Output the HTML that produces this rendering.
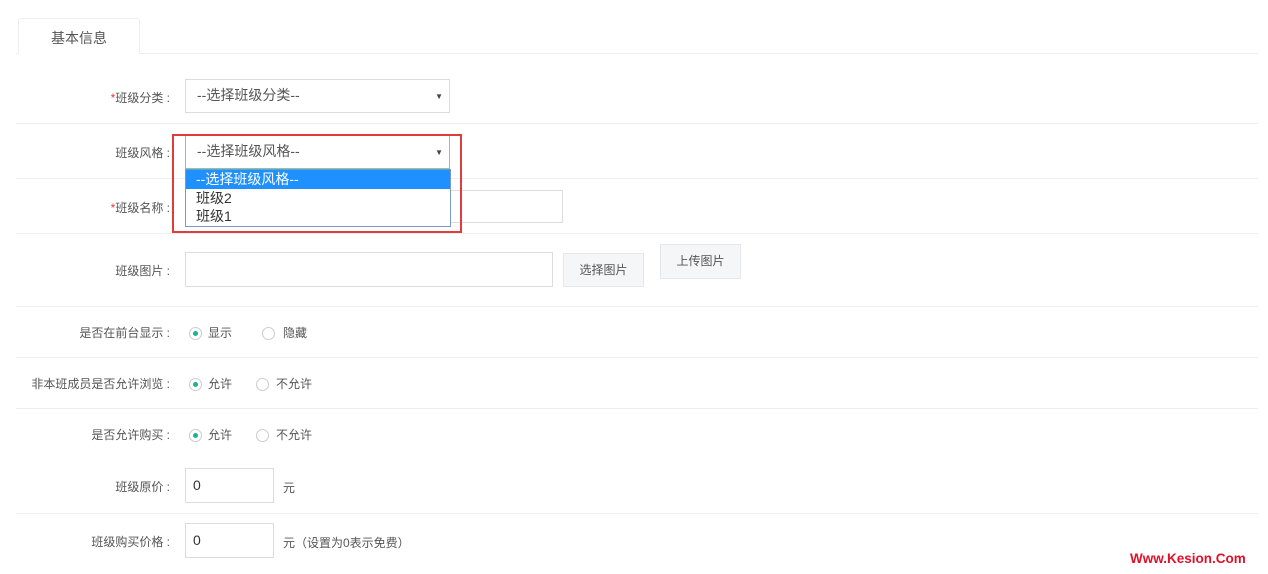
<!DOCTYPE html>
<html><head><meta charset="utf-8"><style>
body{margin:0;width:1268px;height:574px;background:#fff;font-family:"Liberation Sans","Noto Sans CJK SC",sans-serif;font-size:12px;color:#555;position:relative;overflow:hidden}
.a{position:absolute}
.hl{position:absolute;left:16px;width:1242px;height:1px;background:#eceeef}
.lb{position:absolute;right:1098px;text-align:right;white-space:nowrap}
.lb i{color:#e33;font-style:normal}
.box{position:absolute;border:1px solid #dcdcdc;background:#fff;box-sizing:border-box}
.sel{font-size:14px;color:#555;padding-left:11px;line-height:31px}
.arr{position:absolute;right:6px;top:0;font-size:8px;color:#444}
.btn{position:absolute;background:#f4f6f7;border:1px solid #e5e8ea;box-sizing:border-box;text-align:center;color:#555}
.r{position:absolute;width:13px;height:13px;border:1px solid #ccc;border-radius:50%;box-sizing:border-box;background:#fff}
.r.on::after{content:"";position:absolute;left:3px;top:3px;width:5px;height:5px;border-radius:50%;background:#1ab394}
</style></head><body>
<div class="a" style="left:18px;top:18px;width:122px;height:36px;border:1px solid #eceeef;border-bottom:none;border-radius:3px 3px 0 0;box-sizing:border-box;background:#fff;text-align:center;line-height:38px;font-size:14px;color:#555;z-index:2">基本信息</div>
<div class="hl" style="top:53px"></div>
<div class="hl" style="top:123px"></div>
<div class="hl" style="top:178px"></div>
<div class="hl" style="top:233px"></div>
<div class="hl" style="top:306px"></div>
<div class="hl" style="top:357px"></div>
<div class="hl" style="top:408px"></div>
<div class="hl" style="top:513px"></div>

<div class="lb" style="top:89px"><i>*</i>班级分类 :</div>
<div class="box sel" style="left:185px;top:79px;width:265px;height:34px">--选择班级分类--<span class="arr" style="top:1px">▼</span></div>

<div class="lb" style="top:144px">班级风格 :</div>
<div class="box sel" style="left:185px;top:135px;width:265px;height:34px;border-color:#7cc8b8">--选择班级风格--<span class="arr" style="top:1px">▼</span></div>

<div class="lb" style="top:199px"><i>*</i>班级名称 :</div>
<div class="box" style="left:185px;top:190px;width:378px;height:33px"></div>

<div class="a" style="left:185px;top:169px;width:266px;height:58px;border:1px solid #7a9bbf;box-sizing:border-box;background:#fff;font-size:14px;color:#333;line-height:18px">
<div style="background:#1e90ff;color:#fff;padding-left:10px;height:19px">--选择班级风格--</div>
<div style="padding-left:10px">班级2</div>
<div style="padding-left:10px">班级1</div>
</div>
<div class="a" style="left:172px;top:134px;width:290px;height:99px;border:2px solid #e03c3c;box-sizing:border-box"></div>

<div class="lb" style="top:262px">班级图片 :</div>
<div class="box" style="left:185px;top:252px;width:368px;height:35px"></div>
<div class="btn" style="left:563px;top:253px;width:81px;height:34px;line-height:33px">选择图片</div>
<div class="btn" style="left:660px;top:244px;width:81px;height:35px;line-height:33px">上传图片</div>

<div class="lb" style="top:324px">是否在前台显示 :</div>
<div class="r on" style="left:189px;top:327px"></div><div class="a" style="left:208px;top:324px">显示</div>
<div class="r" style="left:262px;top:327px"></div><div class="a" style="left:283px;top:324px">隐藏</div>

<div class="lb" style="top:375px">非本班成员是否允许浏览 :</div>
<div class="r on" style="left:189px;top:378px"></div><div class="a" style="left:208px;top:375px">允许</div>
<div class="r" style="left:256px;top:378px"></div><div class="a" style="left:276px;top:375px">不允许</div>

<div class="lb" style="top:426px">是否允许购买 :</div>
<div class="r on" style="left:189px;top:429px"></div><div class="a" style="left:208px;top:426px">允许</div>
<div class="r" style="left:256px;top:429px"></div><div class="a" style="left:276px;top:426px">不允许</div>

<div class="lb" style="top:478px">班级原价 :</div>
<div class="box" style="left:185px;top:468px;width:89px;height:35px;font-size:14px;line-height:33px;padding-left:7px;color:#333">0</div>
<div class="a" style="left:283px;top:479px">元</div>

<div class="lb" style="top:533px">班级购买价格 :</div>
<div class="box" style="left:185px;top:523px;width:89px;height:35px;font-size:14px;line-height:33px;padding-left:7px;color:#333">0</div>
<div class="a" style="left:283px;top:534px">元（设置为0表示免费）</div>

<div class="a" style="left:1130px;top:551px;font-weight:bold;font-size:13.5px;color:#e0102a;font-family:'Liberation Sans',sans-serif">Www.Kesion.Com</div>
</body></html>
